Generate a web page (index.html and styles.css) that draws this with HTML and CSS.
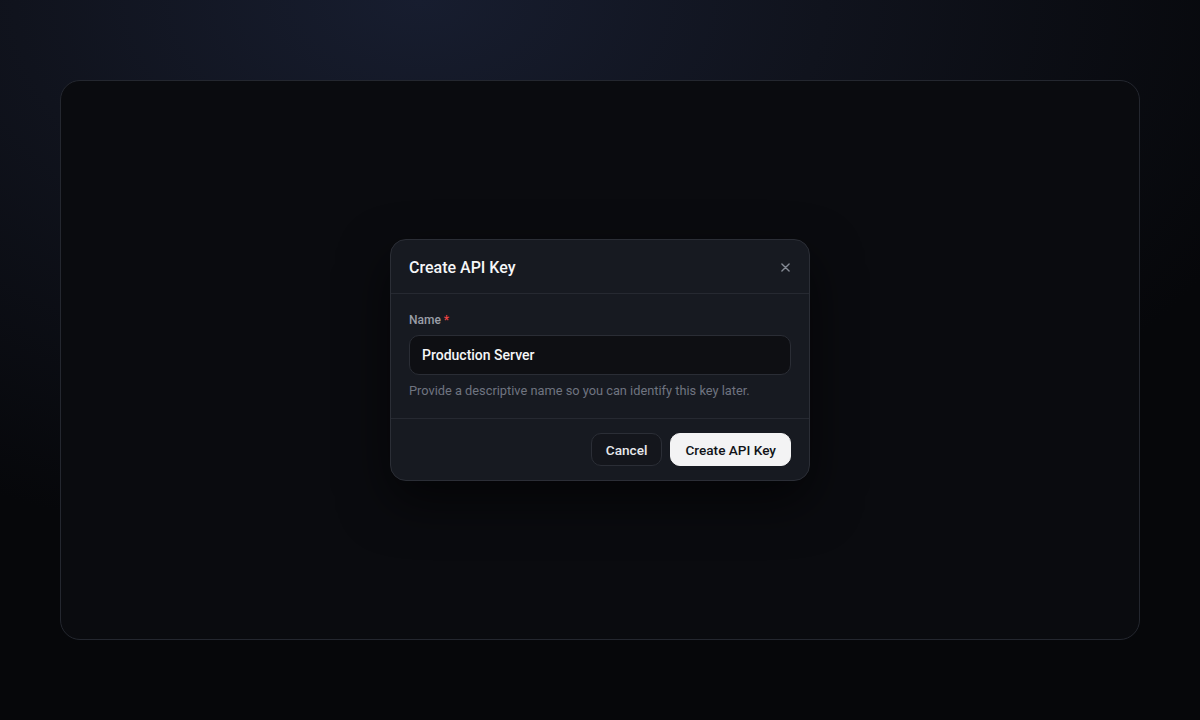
FILE: index.html
```html
<!DOCTYPE html>
<html lang="en">
<head>
    <meta charset="UTF-8">
    <meta name="viewport" content="width=device-width, initial-scale=1.0">
    <title>Create API Key</title>
    <link rel="stylesheet" href="styles.css">
</head>
<body>
    <div class="stage">
        <div class="modal" role="dialog" aria-labelledby="modal-title">
            <header class="modal-header">
                <h2 id="modal-title">Create API Key</h2>
                <button class="close-btn" aria-label="Close">
                    <svg width="10" height="10" viewBox="0 0 10 10">
                        <path d="M1 1 L9 9 M9 1 L1 9" stroke="currentColor" stroke-width="1.5" stroke-linecap="round"/>
                    </svg>
                </button>
            </header>

            <div class="modal-body">
                <label for="key-name" class="field-label">Name <span class="required">*</span></label>
                <input id="key-name" class="text-input" type="text" value="Production Server">
                <p class="field-hint">Provide a descriptive name so you can identify this key later.</p>
            </div>

            <footer class="modal-footer">
                <button class="btn btn-secondary">Cancel</button>
                <button class="btn btn-primary">Create API Key</button>
            </footer>
        </div>
    </div>
</body>
</html>
```

FILE: styles.css
```css
/* Reset and base styles */
* {
    margin: 0;
    padding: 0;
    box-sizing: border-box;
}

html, body {
    height: 100%;
}

body {
    font-family: Roboto, "Liberation Sans", Arial, sans-serif;
    color: #f3f4f6;
    background-color: #06070a;
    background-image: radial-gradient(ellipse 900px 560px at 420px 0px, #171d2f 0%, #10131d 45%, #06070a 100%);
    padding: 80px 60px;
}

/* Backdrop panel */
.stage {
    height: 560px;
    border: 1px solid #24272f;
    border-radius: 20px;
    background-color: #0a0b0f;
    display: flex;
    align-items: center;
    justify-content: center;
}

/* Modal */
.modal {
    width: 420px;
    background-color: #171a21;
    border: 1px solid #2b2e36;
    border-radius: 16px;
    box-shadow: 0 20px 50px rgba(0, 0, 0, 0.6);
}

.modal-header {
    display: flex;
    align-items: center;
    justify-content: space-between;
    height: 54px;
    padding: 2px 14px 0 18px;
    border-bottom: 1px solid #262931;
}

.modal-header h2 {
    font-size: 16px;
    font-weight: 500;
    color: #f5f6f8;
}

.close-btn {
    width: 20px;
    height: 20px;
    display: flex;
    align-items: center;
    justify-content: center;
    background: none;
    border: none;
    color: #858a94;
    cursor: pointer;
}

.close-btn svg {
    width: 9px;
    height: 9px;
}

.modal-body {
    padding: 19px 18px 20px;
    border-bottom: 1px solid #262931;
}

.field-label {
    display: block;
    font-size: 12px;
    font-weight: 500;
    color: #9a9ea8;
    margin-bottom: 8px;
}

.required {
    color: #ef4444;
}

.text-input {
    display: block;
    width: 100%;
    height: 40px;
    padding: 0 12px;
    background-color: #0e0f13;
    border: 1px solid #2a2d35;
    border-radius: 10px;
    font-family: inherit;
    font-size: 14px;
    font-weight: 500;
    color: #f5f6f8;
    outline: none;
}

.field-hint {
    margin-top: 8px;
    font-size: 12.8px;
    color: #6f7480;
}

.modal-footer {
    display: flex;
    justify-content: flex-end;
    gap: 8px;
    padding: 14px 18px;
}

.btn {
    height: 33px;
    padding: 0 14px;
    border-radius: 10px;
    font-family: inherit;
    font-size: 13.6px;
    font-weight: 500;
    cursor: pointer;
}

.btn-secondary {
    background-color: #14161c;
    border: 1px solid #2b2e36;
    color: #e8e9ec;
}

.btn-primary {
    background-color: #f3f3f4;
    border: 1px solid #f3f3f4;
    color: #111318;
}
```
